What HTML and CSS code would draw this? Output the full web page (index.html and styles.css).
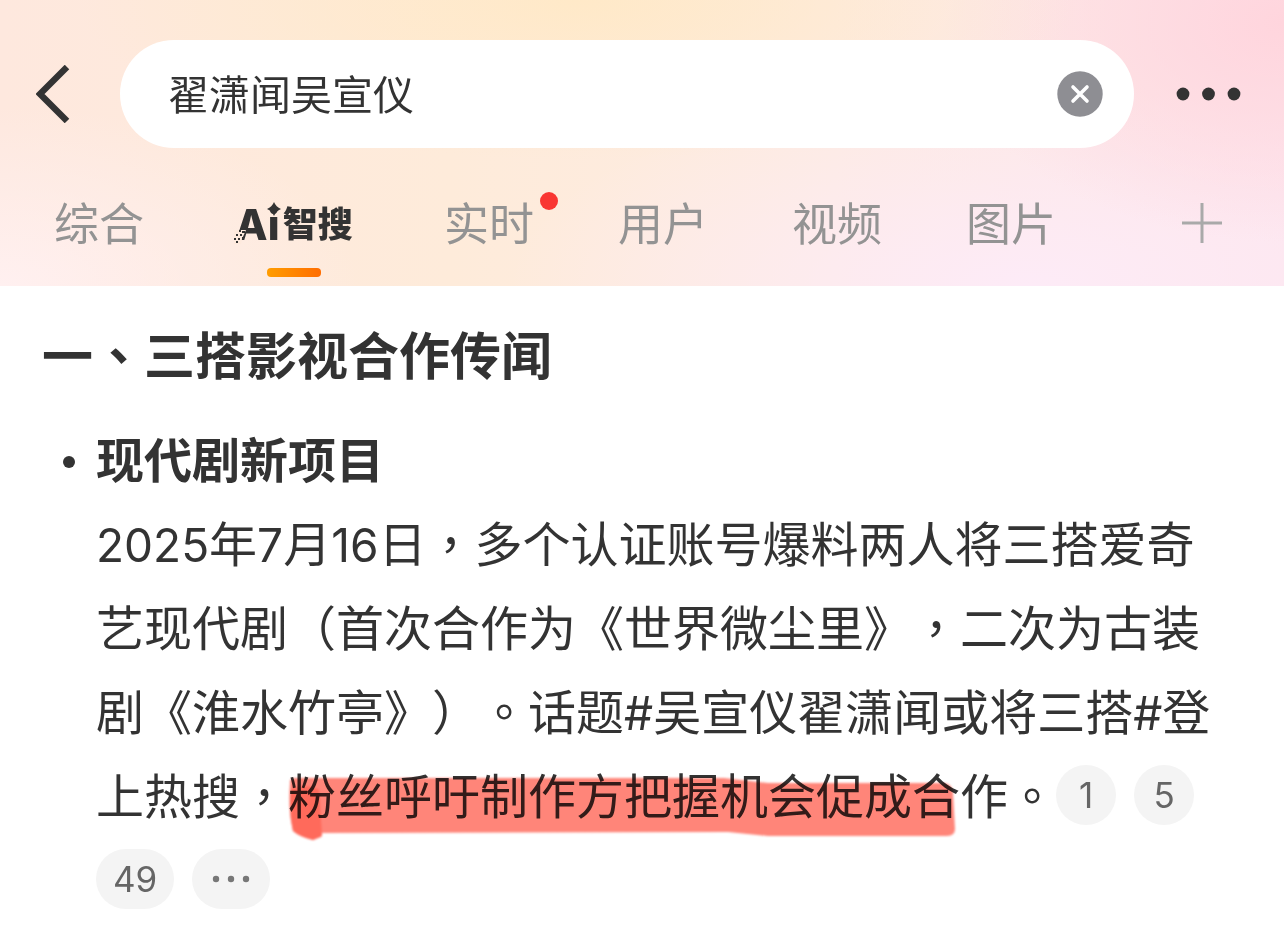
FILE: index.html
```html
<!DOCTYPE html>
<html lang="zh-CN">
<head>
<meta charset="utf-8">
<meta name="viewport" content="width=device-width, initial-scale=1">
<title>翟潇闻吴宣仪</title>
<link rel="stylesheet" href="styles.css">
</head>
<body>
<header class="header">
  <form class="search-row">
    <button class="icon-button back" type="button" aria-label="返回">
      <svg width="34" height="58" viewBox="0 0 34 58"><path d="M31 2 4 29l27 27" fill="none" stroke="#333" stroke-width="6.4"/></svg>
    </button>
    <div class="search-box">
      <input class="search-input" type="text" aria-label="搜索" value="翟潇闻吴宣仪">
      <button class="icon-button" type="button" aria-label="清除">
        <svg width="46" height="46" viewBox="0 0 46 46"><circle cx="23" cy="23" r="22.7" fill="#8e8e93"/><path d="m16 16 14 14M30 16 16 30" stroke="#fff" stroke-width="3.6" stroke-linecap="round"/></svg>
      </button>
    </div>
    <button class="icon-button more" type="button" aria-label="更多">
      <svg width="66" height="14" viewBox="0 0 66 14" fill="#333"><circle cx="7" cy="7" r="6.4"/><circle cx="32.500" cy="7" r="6.4"/><circle cx="58" cy="7" r="6.4"/></svg>
    </button>
  </form>
  <nav class="tabs">
    <a class="tab" href="#all">综合</a>
    <a class="tab tab-active" href="#ai" aria-current="page">
      <span class="logo"><span class="logo-latin">Ai</span><span class="logo-han">智搜</span>
        <svg class="logo-spark" width="14" height="14" viewBox="0 0 14 14"><path d="M7 0q2 5 7 7-5 2-7 7-2-5-7-7 5-2 7-7z" fill="#333"/></svg>
        <svg class="logo-dots" width="12" height="14" viewBox="0 0 12 14"><path d="M0 0h12L8 9 7 14H0z" fill="#feeadd"/><path d="M5 0h2v2H5zM8 1h3v2H8zM2 4h2v2H2zM6 4h2v2H6zM8 7h2v2H8zM0 8h2v2H0zM4 8h2v2H4zM2 11h2v2H2z" fill="#333"/></svg>
      </span>
    </a>
    <a class="tab" href="#live">实时<span class="badge"></span></a>
    <a class="tab" href="#users">用户</a>
    <a class="tab" href="#video">视频</a>
    <a class="tab" href="#images">图片</a>
    <button class="icon-button add" type="button" aria-label="添加">
      <svg width="40" height="40" viewBox="0 0 40 40"><path d="M20 0v40M0 20h40" stroke="#a9a9a9" stroke-width="3"/></svg>
    </button>
  </nav>
</header>
<main class="content">
  <h1 class="title">一<span lang="zh-Hant">、</span>三搭影视合作传闻</h1>
  <ul class="list">
    <li class="item">
      <h2 class="subtitle">现代剧新项目</h2>
      <p class="text"><span class="num">2025</span>年<span class="num">7</span>月<span class="num">16</span>日<span lang="zh-Hant">，</span>多个认证账号爆料两人将三搭爱奇艺现代剧（首次合作为《世界微尘里》<span lang="zh-Hant">，</span>二次为古装剧《淮水竹亭》）<span lang="zh-Hant">。</span>话题<span class="num">#</span>吴宣仪翟潇闻或将三搭<span class="num">#</span>登上热搜<span lang="zh-Hant">，</span><span class="marked">粉丝呼吁制作方把握机会促成合<svg class="marker" viewBox="0 0 672 66" preserveAspectRatio="none"><path d="M2 8Q1 3 8 3L436 3 480 8 655 8Q664 8 665 18L667 54Q667 61 659 61L480 61 440 57 34 58 33 62 25 65Q12 62 5 56Q0 35 2 8Z" fill="#ff8579"/><path d="M3 14Q20 8 31 15L34 61 25 65Q12 62 5 56Q0 35 3 14Z" fill="#ff6a5b"/></svg></span>作<span lang="zh-Hant">。</span><span class="refs"><a class="ref" href="#r1">1</a><a class="ref" href="#r5">5</a><a class="ref" href="#r49">49</a><button class="ref ref-more" type="button" aria-label="更多来源"><svg width="38" height="8" viewBox="0 0 38 8" fill="#777"><circle cx="4" cy="4" r="3.200"/><circle cx="19" cy="4" r="3.200"/><circle cx="34" cy="4" r="3.200"/></svg></button></span></p>
    </li>
  </ul>
</main>
</body>
</html>
```

FILE: styles.css
```css
* {
  box-sizing: border-box;
}

body {
  margin: 0;
  background: #fff;
  color: #333;
  font-family: Inter, "Noto Sans CJK SC", sans-serif;
  text-spacing-trim: space-all;
}

.header {
  padding: 40px 42px 0 36px;
  background:
    radial-gradient(ellipse 500px 160px at 45% 0, #ffe9c8 0, #ffe9c800 100%),
    radial-gradient(ellipse 340px 220px at 100% 8%, #ffd5dd 0, #ffd5dd00 100%),
    radial-gradient(ellipse 520px 200px at 80% 100%, #fdebf7 0, #fdebf700 100%),
    radial-gradient(ellipse 360px 180px at 0 100%, #fff0f0 0, #fff0f000 100%),
    linear-gradient(90deg, #fee8de 0, #feebda 35%, #fdebe2 65%, #fde5ec 100%);
}

.search-row {
  display: flex;
  align-items: center;
}

.icon-button {
  display: flex;
  flex: none;
  margin: 0;
  padding: 0;
  border: 0;
  background: none;
}

.search-box {
  display: flex;
  flex: 1;
  align-items: center;
  min-width: 0;
  height: 108px;
  margin: 0 42px 0 50px;
  padding: 0 31px 0 48px;
  border-radius: 54px;
  background: #fff;
}

.search-input {
  flex: 1;
  min-width: 0;
  padding: 0 0 4px;
  border: 0;
  outline: 0;
  background: none;
  color: #333;
  font: 400 41px/60px "Noto Sans CJK SC", sans-serif;
}

.tabs {
  display: flex;
  align-items: center;
  gap: 84px;
  height: 138px;
  padding: 0 20px 0 18px;
}

.tab {
  position: relative;
  display: flex;
  align-items: center;
  height: 100%;
  padding-top: 10px;
  color: #939393;
  font: 400 45px/60px "Noto Sans CJK SC", sans-serif;
  text-decoration: none;
  white-space: nowrap;
}

.tab-active {
  justify-content: center;
  width: 132px;
  color: #333;
}

.tab-active::after {
  content: "";
  position: absolute;
  bottom: 9px;
  left: 39px;
  width: 54px;
  height: 9px;
  border-radius: 4px;
  background: linear-gradient(90deg, #ff9d00, #ff6d00);
}

.logo {
  position: relative;
  display: flex;
  align-items: center;
  gap: 3px;
}

.logo-latin {
  padding-top: 6px;
  font: 800 42px/60px Inter, sans-serif;
}

.logo-han {
  font: 900 35px/60px "Noto Sans CJK SC", sans-serif;
}

.logo-spark {
  position: absolute;
  top: 13px;
  left: 32px;
}

.logo-dots {
  position: absolute;
  top: 41px;
  left: -1px;
}

.badge {
  position: absolute;
  top: 44px;
  right: -24px;
  width: 18px;
  height: 18px;
  border-radius: 50%;
  background: #f93632;
}

.add {
  margin: 12px 0 0 auto;
}

.content {
  padding: 35px 56px 20px 42px;
}

.title {
  margin: 0;
  font-size: 51px;
  font-weight: 700;
  line-height: 72px;
}

.list {
  margin: 26px 0 0;
  padding: 0 0 0 54px;
  list-style: none;
}

.item {
  position: relative;
}

.item::before {
  content: "";
  position: absolute;
  top: 37px;
  left: -33px;
  width: 12px;
  height: 12px;
  border-radius: 50%;
  background: #333;
}

.subtitle {
  margin: 0;
  font-size: 48px;
  font-weight: 700;
  line-height: 84px;
}

.text {
  margin: 0;
  font-size: 48px;
  font-weight: 400;
  line-height: 84px;
}

.num {
  font-size: 46px;
  line-height: 60px;
}

.marked {
  position: relative;
  white-space: nowrap;
}

.marker {
  position: absolute;
  top: 8px;
  left: 0;
  width: 100%;
  height: 66px;
  filter: blur(1px);
  mix-blend-mode: multiply;
}

.refs {
  line-height: 0;
  vertical-align: 6px;
}

.ref {
  display: inline-flex;
  align-items: center;
  justify-content: center;
  min-width: 60px;
  height: 60px;
  margin-right: 18px;
  padding: 0 17px;
  border: 0;
  border-radius: 30px;
  background: #f4f4f4;
  color: #666;
  font: 400 35px/60px Inter, sans-serif;
  text-decoration: none;
  vertical-align: middle;
}

.ref-more {
  padding: 0 20px;
}
```
